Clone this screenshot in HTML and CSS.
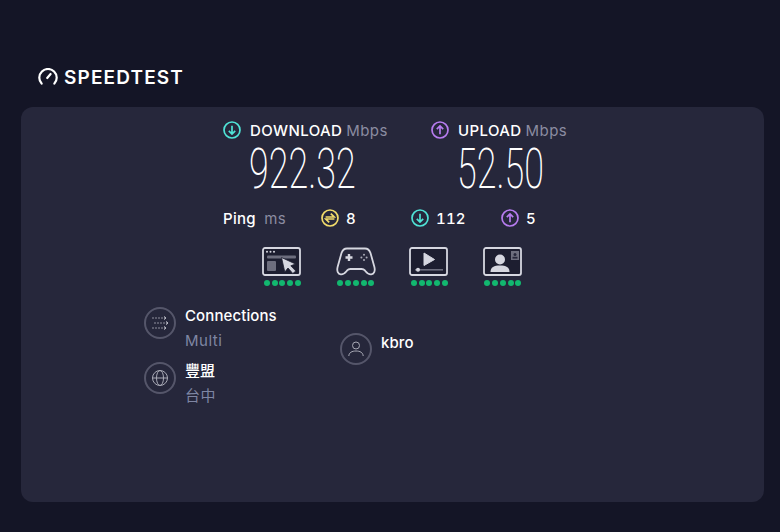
FILE: index.html
```html
<!DOCTYPE html>
<html lang="en">
<head>
  <meta charset="UTF-8">
  <meta name="viewport" content="width=device-width, initial-scale=1.0">
  <title>Speedtest</title>
  <link rel="stylesheet" href="styles.css">
</head>
<body>
<header class="logo">
  <svg class="logo-icon" viewBox="0 0 20 18" width="20" height="18">
    <path d="M3.6 15.6A8.7 8.7 0 1 1 16.4 15.6" fill="none" stroke="#fff" stroke-width="2.2" stroke-linecap="round"/>
    <path d="M9.2 10L12.6 6" fill="none" stroke="#fff" stroke-width="2.2" stroke-linecap="round"/>
  </svg>
  <span class="logo-text">SPEEDTEST</span>
</header>

<main class="panel">
  <div class="speeds">
    <div class="speed speed-down">
      <div class="speed-label">
        <svg class="dir-icon" viewBox="0 0 18 18" width="18" height="18">
          <circle cx="9" cy="9" r="8" fill="none" stroke="#4fe3d6" stroke-width="1.7"/>
          <path d="M9 4.8V13M5.8 9.8L9 13L12.2 9.8" fill="none" stroke="#4fe3d6" stroke-width="1.7"/>
        </svg>
        <span class="label-name">DOWNLOAD</span><span class="unit">Mbps</span>
      </div>
      <div class="speed-value"><span>922.32</span></div>
    </div>
    <div class="speed speed-up">
      <div class="speed-label">
        <svg class="dir-icon" viewBox="0 0 18 18" width="18" height="18">
          <circle cx="9" cy="9" r="8" fill="none" stroke="#b77cf0" stroke-width="1.7"/>
          <path d="M9 13.2V5M5.8 8.2L9 5L12.2 8.2" fill="none" stroke="#b77cf0" stroke-width="1.7"/>
        </svg>
        <span class="label-name">UPLOAD</span><span class="unit">Mbps</span>
      </div>
      <div class="speed-value"><span>52.50</span></div>
    </div>
  </div>

  <div class="ping">
    <div class="ping-title">Ping <span class="unit">ms</span></div>
    <div class="ping-item ping-jitter">
      <svg viewBox="0 0 18 18" width="18" height="18">
        <circle cx="9" cy="9" r="8" fill="none" stroke="#f2dc6b" stroke-width="1.7"/>
        <path d="M4.6 8H13.2L9.8 4.6M13.4 10H4.8L8.2 13.4" fill="none" stroke="#f2dc6b" stroke-width="1.7"/>
      </svg>
      <span>8</span>
    </div>
    <div class="ping-item ping-down">
      <svg viewBox="0 0 18 18" width="18" height="18">
        <circle cx="9" cy="9" r="8" fill="none" stroke="#4fe3d6" stroke-width="1.7"/>
        <path d="M9 4.8V13M5.8 9.8L9 13L12.2 9.8" fill="none" stroke="#4fe3d6" stroke-width="1.7"/>
      </svg>
      <span>112</span>
    </div>
    <div class="ping-item ping-up">
      <svg viewBox="0 0 18 18" width="18" height="18">
        <circle cx="9" cy="9" r="8" fill="none" stroke="#b77cf0" stroke-width="1.7"/>
        <path d="M9 13.2V5M5.8 8.2L9 5L12.2 8.2" fill="none" stroke="#b77cf0" stroke-width="1.7"/>
      </svg>
      <span>5</span>
    </div>
  </div>

  <div class="ratings">
    <div class="rating">
      <svg viewBox="0 0 40 30" width="40" height="30">
        <rect x="1" y="1" width="37" height="27" rx="2" fill="#1d1e30" stroke="#d6d7e0" stroke-width="1.8"/>
        <circle cx="5" cy="4.8" r="1" fill="#d6d7e0"/><circle cx="8.5" cy="4.8" r="1" fill="#d6d7e0"/><circle cx="12" cy="4.8" r="1" fill="#d6d7e0"/>
        <rect x="5" y="8.5" width="29" height="3" rx="1" fill="#6d6e7e"/>
        <rect x="5" y="14" width="9" height="10" rx="1" fill="#6d6e7e"/>
        <path d="M19.5 10.5L33.5 17L28.8 18.8L33.8 24L30.8 26.5L26 21L22.8 25Z" fill="#d6d7e0" stroke="#1d1e30" stroke-width=".8"/>
      </svg>
      <div class="dots"><i></i><i></i><i></i><i></i><i></i></div>
    </div>
    <div class="rating">
      <svg viewBox="0 0 40 30" width="40" height="30">
        <path d="M11 1.5H29C32 1.5 33.5 3 34.5 6L38.4 20C39.4 24 38 27 35.2 27.4C32 27.8 30.6 25.6 28.8 23.4C28 22.4 27 22 25.6 22H14.4C13 22 12 22.4 11.2 23.4C9.4 25.6 8 27.8 4.8 27.4C2 27 .6 24 1.6 20L5.5 6C6.5 3 8 1.5 11 1.5Z" fill="none" stroke="#d6d7e0" stroke-width="1.8"/>
        <path d="M9.5 10.5H16.5M13 7V14" fill="none" stroke="#d6d7e0" stroke-width="2.4"/>
        <circle cx="28" cy="7.8" r="1" fill="#a9aab6"/><circle cx="28" cy="13" r="1" fill="#a9aab6"/><circle cx="25.4" cy="10.4" r="1" fill="#a9aab6"/><circle cx="30.6" cy="10.4" r="1" fill="#a9aab6"/>
      </svg>
      <div class="dots"><i></i><i></i><i></i><i></i><i></i></div>
    </div>
    <div class="rating">
      <svg viewBox="0 0 40 30" width="40" height="30">
        <rect x="1" y="1" width="37" height="27" rx="2" fill="#1d1e30" stroke="#d6d7e0" stroke-width="1.8"/>
        <path d="M15 6L25.5 12.5L15 18.5Z" fill="#d6d7e0" stroke="#d6d7e0" stroke-linejoin="round"/>
        <rect x="6" y="22" width="28" height="1.6" fill="#6d6e7e"/>
        <circle cx="9" cy="22.8" r="2" fill="#d6d7e0"/>
      </svg>
      <div class="dots"><i></i><i></i><i></i><i></i><i></i></div>
    </div>
    <div class="rating">
      <svg viewBox="0 0 40 30" width="40" height="30">
        <rect x="1" y="1" width="37" height="27" rx="2" fill="#1d1e30" stroke="#d6d7e0" stroke-width="1.8"/>
        <circle cx="17" cy="12.5" r="5" fill="#d6d7e0"/>
        <path d="M7.5 25C7.5 20 11 18.5 17 18.5C23 18.5 26.5 20 26.5 25Z" fill="#d6d7e0"/>
        <rect x="28" y="4" width="8" height="9" fill="#6d6e7e"/>
        <circle cx="32" cy="7.5" r="1.5" fill="#26273b"/>
        <rect x="29.5" y="9.8" width="5" height="1.8" fill="#26273b"/>
      </svg>
      <div class="dots"><i></i><i></i><i></i><i></i><i></i></div>
    </div>
  </div>

  <div class="details">
    <div class="details-left">
      <div class="detail">
        <div class="detail-icon">
          <svg viewBox="0 0 17 14" width="17" height="14">
            <path d="M0 2H13M2 7H15M0 12H13" fill="none" stroke="#8f909e" stroke-width="1" stroke-dasharray="2 1"/>
            <path d="M12 .5L14 2L12 3.5M14 5.5L16 7L14 8.5M12 10.5L14 12L12 13.5" fill="none" stroke="#c4c5cf" stroke-width="1"/>
          </svg>
        </div>
        <div class="detail-text">
          <div class="detail-title">Connections</div>
          <div class="detail-sub">Multi</div>
        </div>
      </div>
      <div class="detail">
        <div class="detail-icon">
          <svg viewBox="0 0 18 18" width="18" height="18">
            <circle cx="9" cy="9" r="7.5" fill="none" stroke="#a9aab6" stroke-width="1"/>
            <ellipse cx="9" cy="9" rx="3.5" ry="7.5" fill="none" stroke="#a9aab6" stroke-width="1"/>
            <path d="M1.5 9H16.5" fill="none" stroke="#a9aab6" stroke-width="1"/>
          </svg>
        </div>
        <div class="detail-text">
          <div class="detail-title cjk">豐盟</div>
          <div class="detail-sub cjk">台中</div>
        </div>
      </div>
    </div>
    <div class="detail detail-user">
      <div class="detail-icon">
        <svg viewBox="0 0 18 18" width="18" height="18">
          <circle cx="9" cy="5.5" r="3.5" fill="none" stroke="#a9aab6" stroke-width="1"/>
          <path d="M1.8 16C2 12.5 5 11 9 11C13 11 16 12.5 16.2 16" fill="none" stroke="#a9aab6" stroke-width="1"/>
        </svg>
      </div>
      <div class="detail-text">
        <div class="detail-title">kbro</div>
      </div>
    </div>
  </div>
</main>
</body>
</html>
```

FILE: styles.css
```css
html, body {
  height: 100%;
}
body {
  margin: 0;
  background: #141526;
  color: #fff;
  font-family: Inter, "Noto Sans CJK TC", sans-serif;
  overflow: hidden;
}

.logo {
  display: flex;
  align-items: center;
  gap: 6px;
  height: 20px;
  padding: 67px 0 0 38px;
  margin-bottom: 20px;
}
.logo-text {
  font-size: 19px;
  font-weight: 600;
  letter-spacing: 1.15px;
}

.panel {
  width: 743px;
  height: 395px;
  margin-left: 21px;
  box-sizing: border-box;
  padding-top: 14px;
  background: #26273b;
  border-radius: 12px;
}

.speeds {
  display: flex;
  padding-left: 202px;
}
.speed-down {
  width: 208px;
}
.speed-label {
  display: flex;
  align-items: center;
  height: 18px;
  font-size: 15px;
  font-weight: 500;
  letter-spacing: .4px;
}
.dir-icon {
  margin-right: 9px;
}
.speed-label .unit {
  margin-left: 4px;
}
.unit {
  color: #8b8ca1;
  font-weight: 400;
}
.speed-value {
  height: 61px;
  line-height: 58px;
  margin-top: 1px;
  padding-left: 26px;
  font-family: Roboto, sans-serif;
  font-size: 56px;
  font-weight: 200;
}
.speed-value span {
  display: inline-block;
  transform: scaleX(.64);
  transform-origin: left center;
}

.ping {
  display: flex;
  align-items: center;
  height: 18px;
  margin-top: 8px;
  padding-left: 202px;
  font-size: 15px;
  font-weight: 500;
}
.ping-title {
  width: 98px;
  letter-spacing: .3px;
}
.ping-title .unit {
  margin-left: 4px;
}
.ping-item {
  display: flex;
  align-items: center;
  gap: 7px;
  font-variant-numeric: tabular-nums;
  letter-spacing: .2px;
}
.ping-jitter {
  width: 90px;
}
.ping-down {
  width: 90px;
}

.ratings {
  display: flex;
  justify-content: center;
  gap: 33.5px;
  margin-top: 20px;
}
.rating {
  display: flex;
  flex-direction: column;
  align-items: center;
  gap: 3px;
  width: 40px;
}
.rating svg {
  display: block;
}
.dots {
  display: flex;
  gap: 1.75px;
}
.dots i {
  width: 6px;
  height: 6px;
  border-radius: 50%;
  background: #12b76f;
}

.details {
  display: flex;
  padding: 18px 0 0 123px;
}
.details-left {
  display: flex;
  flex-direction: column;
  gap: 6px;
  width: 196px;
}
.detail {
  display: flex;
  gap: 9px;
}
.detail-user {
  margin-top: 27px;
}
.detail-icon {
  display: flex;
  align-items: center;
  justify-content: center;
  width: 28px;
  height: 28px;
  margin-top: 3px;
  border: 2px solid #55566a;
  border-radius: 50%;
}
.detail-user .detail-icon {
  margin-top: 2px;
}
.detail-title {
  height: 24px;
  line-height: 24px;
  font-size: 15px;
  font-weight: 500;
  letter-spacing: .1px;
}
.detail-sub {
  height: 24px;
  line-height: 24px;
  margin-top: 1px;
  font-size: 15px;
  letter-spacing: .5px;
  color: #7f86a3;
}
```
